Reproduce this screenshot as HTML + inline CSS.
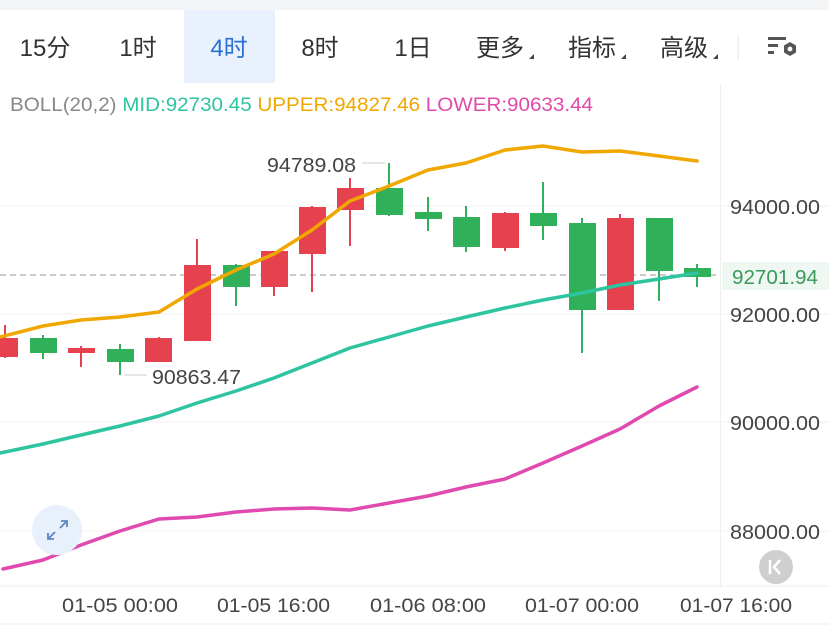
<!DOCTYPE html>
<html><head><meta charset="utf-8"><style>
body{margin:0;width:829px;height:627px;overflow:hidden;background:#fff;font-family:"Liberation Sans","Noto Sans CJK SC",sans-serif;}
</style></head><body>
<svg width="829" height="627" viewBox="0 0 829 627" xmlns="http://www.w3.org/2000/svg" font-family="Liberation Sans, Noto Sans CJK SC, sans-serif">
<rect x="0" y="0" width="829" height="10" fill="#f4f5f7"/>
<rect x="184" y="10" width="91" height="73" fill="#e8f1fc"/>
<g font-size="24" fill="#333" text-anchor="middle">
<text x="45" y="56">15分</text><text x="138" y="56">1时</text>
<text x="229" y="56" fill="#2b6fd3">4时</text><text x="320" y="56">8时</text>
<text x="413" y="56">1日</text><text x="500" y="56">更多</text>
<text x="592" y="56">指标</text><text x="684" y="56">高级</text>
</g>
<g fill="#444"><path d="M529 59l5-5v5z"/><path d="M621 59l5-5v5z"/><path d="M713 59l5-5v5z"/></g>
<line x1="738" y1="35" x2="738" y2="60" stroke="#e5e5e5"/>
<g fill="#555"><rect x="768" y="37" width="18" height="3"/><rect x="768" y="44" width="10" height="3"/><rect x="768" y="51" width="6" height="3"/>
<path d="M790 42l6 3.5v7l-6 3.5-6-3.5v-7z"/><circle cx="790" cy="49" r="2.4" fill="#fff"/></g>
<rect x="720" y="84" width="1" height="503" fill="#eee"/>
<text x="10" y="111" font-size="19" textLength="583" lengthAdjust="spacingAndGlyphs"><tspan fill="#888">BOLL(20,2) </tspan><tspan fill="#2ec4a0">MID:92730.45 </tspan><tspan fill="#f0a800">UPPER:94827.46 </tspan><tspan fill="#e04aa8">LOWER:90633.44</tspan></text>
<g stroke="#f0f0f0"><line x1="0" y1="206" x2="829" y2="206"/><line x1="0" y1="314" x2="829" y2="314"/><line x1="0" y1="422" x2="829" y2="422"/><line x1="0" y1="531" x2="829" y2="531"/></g>
<line x1="0" y1="586" x2="829" y2="586" stroke="#ececec"/>
<line x1="0" y1="624" x2="829" y2="624" stroke="#ececec"/>
<g font-size="20" fill="#444"><text x="730" y="214" textLength="90" lengthAdjust="spacingAndGlyphs">94000.00</text><text x="730" y="322" textLength="90" lengthAdjust="spacingAndGlyphs">92000.00</text><text x="730" y="430" textLength="90" lengthAdjust="spacingAndGlyphs">90000.00</text><text x="730" y="539" textLength="90" lengthAdjust="spacingAndGlyphs">88000.00</text></g>
<rect x="722" y="262" width="107" height="28" fill="#eef7f1"/>
<text x="732" y="284" font-size="20" fill="#3a9a5a" textLength="86" lengthAdjust="spacingAndGlyphs">92701.94</text>
<line x1="0" y1="275" x2="720" y2="275" stroke="#999" stroke-dasharray="6,4"/>
<g stroke-width="2">
<g stroke="#e5414e" fill="#e5414e">
<line x1="5" y1="325" x2="5" y2="358"/><rect x="-8" y="339" width="25" height="17"/>
<line x1="81" y1="346" x2="81" y2="367"/><rect x="69" y="349" width="25" height="3"/>
<line x1="159" y1="337" x2="159" y2="361"/><rect x="146" y="339" width="25" height="22"/>
<line x1="197" y1="239" x2="197" y2="340"/><rect x="185" y="266" width="25" height="74"/>
<line x1="274" y1="252" x2="274" y2="296"/><rect x="262" y="252" width="25" height="34"/>
<line x1="312" y1="206" x2="312" y2="292"/><rect x="300" y="208" width="25" height="45"/>
<line x1="350" y1="178" x2="350" y2="246"/><rect x="338" y="189" width="25" height="20"/>
<line x1="505" y1="212" x2="505" y2="251"/><rect x="493" y="214" width="25" height="33"/>
<line x1="620" y1="214" x2="620" y2="309"/><rect x="608" y="219" width="25" height="90"/>
</g>
<g stroke="#30b058" fill="#30b058">
<line x1="43" y1="335" x2="43" y2="359"/><rect x="31" y="339" width="25" height="13"/>
<line x1="120" y1="344" x2="120" y2="375"/><rect x="108" y="350" width="25" height="11"/>
<line x1="236" y1="264" x2="236" y2="306"/><rect x="224" y="266" width="25" height="20"/>
<line x1="389" y1="163" x2="389" y2="216"/><rect x="377" y="189" width="25" height="25"/>
<line x1="428" y1="197" x2="428" y2="231"/><rect x="416" y="213" width="25" height="5"/>
<line x1="466" y1="206" x2="466" y2="252"/><rect x="454" y="218" width="25" height="28"/>
<line x1="543" y1="182" x2="543" y2="240"/><rect x="531" y="214" width="25" height="11"/>
<line x1="582" y1="218" x2="582" y2="353"/><rect x="570" y="224" width="25" height="85"/>
<line x1="659" y1="219" x2="659" y2="301"/><rect x="647" y="219" width="25" height="51"/>
<line x1="697" y1="264" x2="697" y2="287"/><rect x="685" y="269" width="25" height="7"/>
</g></g>
<g fill="none" stroke-width="3.5" stroke-linejoin="round" stroke-linecap="round">
<polyline stroke="#f0a800" points="0,337 43,326 81,320 120,317 159,312 197,289 236,270 274,254 312,230 350,201 389,186 428,170 466,163 505,150 543,146 582,152 620,151 659,156 697,161"/>
<polyline stroke="#2ec4a0" points="0,453 43,444 81,435 120,426 159,416 197,403 236,391 274,378 312,363 350,348 389,337 428,326 466,317 505,308 543,300 582,293 620,285 659,279 697,273"/>
<polyline stroke="#e04ab0" points="3,569 43,560 81,545 120,531 159,519 197,517 236,512 274,509 312,508 350,510 389,503 428,496 466,487 505,479 543,463 582,446 620,429 659,406 697,387"/>
</g>
<g font-size="20" fill="#444"><text x="267" y="172" textLength="89" lengthAdjust="spacingAndGlyphs">94789.08</text><text x="152" y="384" textLength="89" lengthAdjust="spacingAndGlyphs">90863.47</text></g>
<g stroke="#ccc"><line x1="362" y1="163" x2="385" y2="163"/><line x1="124" y1="375" x2="147" y2="375"/></g>
<circle cx="57" cy="530" r="25" fill="#e8f1fb"/>
<g stroke="#5b86c0" stroke-width="1.8" fill="none"><path d="M48 539l7-7M48 533v6h6M67 521l-7 7M61 521h6v6"/></g>
<circle cx="776" cy="567" r="17" fill="#cfcfcf"/>
<path d="M770 560v14M780 560l-6 7 6 7" stroke="#fff" stroke-width="2.5" fill="none"/>
<g font-size="19" fill="#444"><text x="62" y="612" textLength="116" lengthAdjust="spacingAndGlyphs">01-05 00:00</text><text x="217" y="612" textLength="113" lengthAdjust="spacingAndGlyphs">01-05 16:00</text><text x="370" y="612" textLength="116" lengthAdjust="spacingAndGlyphs">01-06 08:00</text><text x="525" y="612" textLength="114" lengthAdjust="spacingAndGlyphs">01-07 00:00</text><text x="680" y="612" textLength="112" lengthAdjust="spacingAndGlyphs">01-07 16:00</text></g>
</svg>
</body></html>
